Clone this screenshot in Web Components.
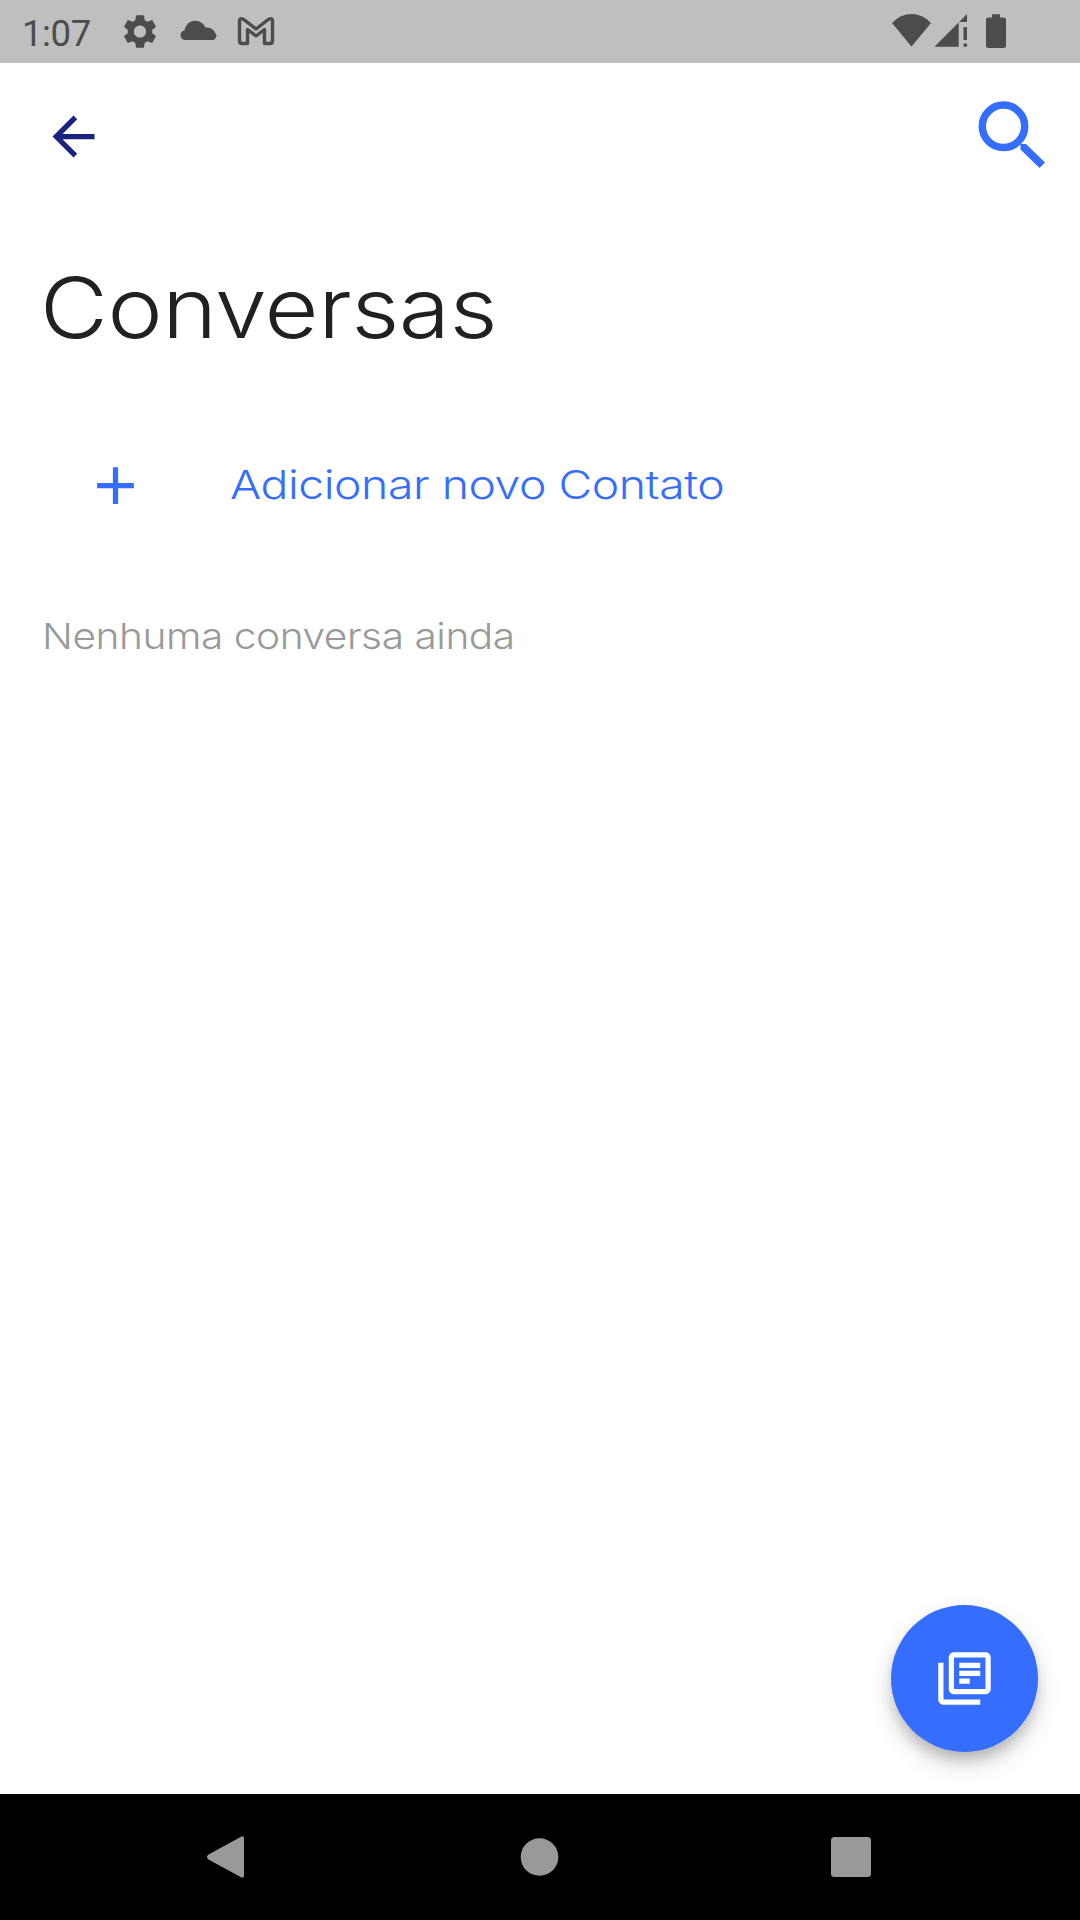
<!DOCTYPE html>
<html lang="pt-BR">
<head>
<meta charset="utf-8">
<title>Conversas</title>
<style>
  body {
    margin: 0;
    background-color: #fff;
  }
</style>
</head>
<body>
<chat-app></chat-app>

<script>
const define = (name, html, setup) => {
  const template = document.createElement('template');
  template.innerHTML = html;

  customElements.define(name, class extends HTMLElement {
    constructor() {
      super();
      this.shadow = this.attachShadow({mode: 'open'});
      this.shadow.appendChild(template.content.cloneNode(true));
    }

    connectedCallback() {
      if (setup) setup(this);
    }
  });
};

// single line of text, stretched to the width attribute
define('wide-text', `
  <style>
    :host {
      display: block;
      white-space: nowrap;
    }
    span {
      display: inline-block;
      transform-origin: 0 50%;
    }
  </style>
  <span></span>
`, (el) => {
  const span = el.shadow.querySelector('span');
  span.textContent = el.getAttribute('text');
  span.style.transform = `scaleX(${el.getAttribute('width') / span.offsetWidth})`;
});

define('status-bar', `
  <style>
    :host {
      display: flex;
      align-items: flex-start;
      justify-content: space-between;
      box-sizing: border-box;
      height: 63px;
      padding: 0 74px 0 22px;
      background-color: #bfbfbf;
      color: #4c4c4c;
    }
    .group {
      display: flex;
    }
    .time {
      width: 98px;
      font: 400 36.5px/67px Roboto, sans-serif;
    }
    svg {
      display: block;
      fill: currentColor;
    }
  </style>
  <div class="group">
    <span class="time">1:07</span>
    <svg width="160" height="63" viewBox="120 0 160 63">
      <path transform="translate(119.6 11.1) scale(1.7)" d="M19.14 12.94c.04-.3.06-.61.06-.94 0-.32-.02-.64-.07-.94l2.03-1.58c.18-.14.23-.41.12-.61l-1.92-3.32c-.12-.22-.37-.29-.59-.22l-2.39.96c-.5-.38-1.03-.7-1.62-.94L14.4 2.81c-.04-.24-.24-.41-.48-.41h-3.84c-.24 0-.43.17-.47.41l-.36 2.54c-.59.24-1.13.57-1.62.94l-2.39-.96c-.22-.08-.47 0-.59.22L2.74 8.87c-.12.21-.08.47.12.61l2.03 1.58c-.05.3-.09.63-.09.94s.02.64.07.94l-2.03 1.58c-.18.14-.23.41-.12.61l1.92 3.32c.12.22.37.29.59.22l2.39-.96c.5.38 1.03.7 1.62.94l.36 2.54c.05.24.24.41.48.41h3.84c.24 0 .44-.17.47-.41l.36-2.54c.59-.24 1.13-.56 1.62-.94l2.39.96c.22.08.47 0 .59-.22l1.92-3.32c.12-.22.07-.47-.12-.61l-2.01-1.58zM12 15.6c-1.98 0-3.6-1.62-3.6-3.6s1.62-3.6 3.6-3.6 3.6 1.62 3.6 3.6-1.62 3.6-3.6 3.6z"/>
      <path d="M185 40a4.800 4.800 0 0 1-.5-9.500c1-5.500 5.200-9.700 10.500-9.700 4.800 0 8.800 2.800 10.300 6.700 4.200-.3 8.300 1.600 9.500 4.900a4.300 4.300 0 0 1-2.800 7.600z"/>
      <path d="M239.500 21.500q0-4 3.500-2.500L256 29l13-10q3.500-1.500 3.500 2.500V41q0 2.500-2.500 2.500h-5.500V29.500L256 36l-8.500-6.500v14H242q-2.500 0-2.500-2.500z" fill="none" stroke="currentColor" stroke-width="3.400" stroke-linejoin="round"/>
    </svg>
  </div>
  <svg width="116" height="63" viewBox="890 0 116 63">
    <path d="M911.500 46.500L892 23q8.500-9 19.500-9t19.500 9z"/>
    <path d="M934.500 46.700L967 14v8h-8.300v24.700z"/>
    <path d="M963.500 27h3.500v13h-3.500zM963.500 43.500h3.500v3.200h-3.500z"/>
    <path d="M992 14.300h8v3.200h3.500q2.500 0 2.500 2.500v25.500q0 2.500-2.500 2.500h-15q-2.500 0-2.500-2.500V20q0-2.500 2.500-2.500h3.500z"/>
  </svg>
`);

define('top-bar', `
  <style>
    :host {
      display: flex;
      align-items: center;
      justify-content: space-between;
      box-sizing: border-box;
      height: 147px;
      padding: 0 34px 0 42px;
    }
    svg {
      display: block;
    }
    .search {
      margin-bottom: 3px;
    }
  </style>
  <svg width="63" height="63" viewBox="0 0 24 24" fill="#1a237e">
    <path d="M20 11H7.830l5.590-5.590L12 4l-8 8 8 8 1.410-1.410L7.830 13H20v-2z"/>
  </svg>
  <svg class="search" width="68" height="68" viewBox="978 101 68 68">
    <circle cx="1003.500" cy="126.300" r="21.200" fill="none" stroke="#356dff" stroke-width="7.500"/>
    <path d="M1020.500 144h5.500l19 18.500-5.500 5.500-19-18.500z" fill="#356dff"/>
  </svg>
`);

define('contact-button', `
  <style>
    :host {
      display: flex;
      align-items: center;
      height: 84px;
      padding-left: 84px;
      color: #356dff;
    }
    svg {
      display: block;
      width: 63px;
      height: 63px;
      margin-right: 83px;
      fill: currentColor;
    }
  </style>
  <svg viewBox="0 0 24 24"><path d="M19 13h-6v6h-2v-6H5v-2h6V5h2v6h6z"/></svg>
  <slot></slot>
`);

define('fab-button', `
  <style>
    :host {
      display: flex;
      align-items: center;
      justify-content: center;
      width: 147px;
      height: 147px;
      border-radius: 50%;
      background-color: #356dff;
      box-shadow: 0 9px 14px -2px rgba(0, 0, 0, .2), 0 12px 26px rgba(0, 0, 0, .14);
    }
  </style>
  <svg width="63" height="63" viewBox="0 0 24 24" fill="#fff">
    <path d="M4 6H2v14c0 1.100.9 2 2 2h14v-2H4V6zM20 2H8c-1.100 0-2 .9-2 2v12c0 1.100.9 2 2 2h12c1.100 0 2-.9 2-2V4c0-1.100-.9-2-2-2zm0 14H8V4h12v12zM10 6h8v2h-8zM10 9h8v2h-8zM10 12h4v2h-4z"/>
  </svg>
`);

define('nav-bar', `
  <style>
    :host {
      display: flex;
      align-items: center;
      justify-content: space-between;
      box-sizing: border-box;
      height: 126px;
      padding: 0 209px 0 206px;
      background-color: #000;
    }
    svg {
      display: block;
      fill: #999;
    }
  </style>
  <svg width="38" height="42"><path d="M2.500 18.500L35 .7Q38-.5 38 2.500v37q0 3-3 1.800L2.500 23.500q-3-2.500 0-5z"/></svg>
  <svg width="42" height="38"><circle cx="22.500" cy="19" r="18.800"/></svg>
  <svg width="40" height="40"><rect width="40" height="40" rx="3.500"/></svg>
`);

define('chat-app', `
  <style>
    :host {
      display: flex;
      flex-direction: column;
      height: 1920px;
      overflow: hidden;
      background-color: #fff;
      font-family: Inter, sans-serif;
      font-weight: 300;
      letter-spacing: -.025em;
    }
    main {
      display: flex;
      flex-direction: column;
      flex: 1;
      padding-bottom: 42px;
    }
    .title {
      margin: 43px 0 0 40px;
      font-size: 84px;
      line-height: 110px;
      color: #212121;
    }
    .contact {
      margin-top: 80px;
    }
    .contact wide-text {
      font-size: 39.5px;
      line-height: 84px;
    }
    .empty {
      margin: 84px 0 0 41.5px;
      font-size: 36px;
      line-height: 50px;
      color: #999;
    }
    fab-button {
      margin: auto 42px 0 auto;
    }
  </style>
  <status-bar></status-bar>
  <top-bar></top-bar>
  <main>
    <wide-text class="title" text="Conversas" width="457"></wide-text>
    <contact-button class="contact">
      <wide-text text="Adicionar novo Contato" width="494"></wide-text>
    </contact-button>
    <wide-text class="empty" text="Nenhuma conversa ainda" width="473"></wide-text>
    <fab-button></fab-button>
  </main>
  <nav-bar></nav-bar>
`);
</script>
</body>
</html>
